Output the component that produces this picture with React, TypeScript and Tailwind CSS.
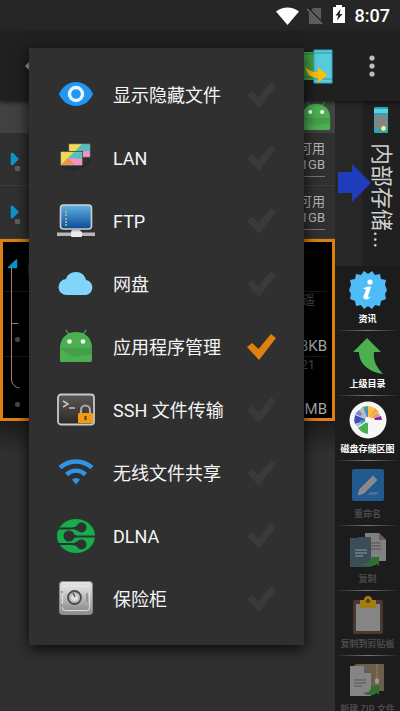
import { ReactNode, useState } from "react";
import { clsx } from "clsx";

function AndroidIcon({ className }: { className?: string }) {
  return (
    <svg viewBox="0 0 34 34" className={className} aria-hidden="true">
      <path d="M7 1l4 6M27 1l-4 6" stroke="#3f8f43" strokeWidth="1.4" />
      <path d="M1 19C1 9 8 3 17 3s16 6 16 16v12a2 2 0 0 1-2 2H3a2 2 0 0 1-2-2z" fill="#4caf50" />
      <path d="M1 19h32v6L14 28z" fill="#459e49" />
      <path d="M1 19l13 14H3a2 2 0 0 1-2-2z" fill="#4caf50" />
      <circle cx="10.500" cy="12.500" r="2.300" fill="#fff" />
      <circle cx="24" cy="12.500" r="2.300" fill="#fff" />
    </svg>
  );
}

function EyeIcon() {
  return (
    <svg viewBox="0 0 38 38" className="size-[38px]">
      <path d="M2 17C5 10 11 5 19 5s14 5 17 12c-3 7-9 12-17 12S5 24 2 17z" fill="#2196f3" />
      <circle cx="19" cy="17" r="6.500" fill="none" stroke="#e3f2fd" strokeWidth="3.400" />
    </svg>
  );
}

function LanIcon() {
  return (
    <svg viewBox="0 0 38 38" className="size-[38px]">
      <path d="M4 26h21l9-8v4l-9 6-9 3-11-3z" fill="#252836" />
      <path d="M12 4h21v13H12z" fill="#4fc1c0" />
      <path d="M12 4h13l-7 7h-6z" fill="#f5d94e" />
      <path d="M26 11h7v6h-7z" fill="#f48fc8" />
      <path d="M12 4h21v13H12z" fill="none" stroke="#8d8d6a" strokeWidth="0.6" />
      <path d="M3 11h23v14H3z" fill="#303030" />
      <path d="M4 12h21v13H4z" fill="#4fc1c0" />
      <path d="M4 12h13L4 25z" fill="#f5d94e" />
      <path d="M4 25l7-7 7 7z" fill="#f2913d" />
      <path d="M11 18l14 1v6h-7z" fill="#f48fc8" />
      <path d="M4 12h21v13H4z" fill="none" stroke="#c9b98a" strokeWidth="0.6" />
    </svg>
  );
}

function FtpIcon() {
  return (
    <svg viewBox="0 0 38 38" className="size-[38px]">
      <defs>
        <linearGradient id="screen" x1="0" y1="0" x2="0" y2="1">
          <stop offset="0" stopColor="#62b2e4" />
          <stop offset="1" stopColor="#0b4a94" />
        </linearGradient>
      </defs>
      <rect x="3.500" y="2" width="31" height="24" rx="3" fill="url(#screen)" stroke="#cfcfcf" strokeWidth="1.600" />
      <path d="M8 9h2M8 12h2M8 16h2M8 19h2M8 22h2" stroke="#b3c884" strokeWidth="1.300" />
      <path d="M15 27h8l1 2h-10z" fill="#c4c4c4" />
      <path d="M0 29.500h38v3.500H0z" fill="#b7b7b7" />
      <rect x="14" y="28.500" width="11" height="5.500" rx="1" fill="#ececec" />
    </svg>
  );
}

function CloudIcon() {
  return (
    <svg viewBox="0 0 38 38" className="size-[38px]">
      <path d="M10 29a8 8 0 0 1-1-16c1-4 5-7 10-7s9 3 10 8a7.600 7.600 0 0 1 0 15z" fill="#81d4fa" />
    </svg>
  );
}

function SshIcon() {
  return (
    <svg viewBox="0 0 38 38" className="size-[38px]">
      <defs>
        <linearGradient id="terminal" x1="0" y1="0" x2="0" y2="1">
          <stop offset="0" stopColor="#5b5855" />
          <stop offset="1" stopColor="#2b2826" />
        </linearGradient>
      </defs>
      <rect x="1" y="2.500" width="36" height="30" rx="3" fill="url(#terminal)" stroke="#c9c9c9" strokeWidth="1.800" />
      <path d="M6 9l5 3-5 3M12 16h6" fill="none" stroke="#c4c4c4" strokeWidth="1.500" />
      <path d="M24 22v-4a4.500 4.500 0 0 1 9 0v4" fill="none" stroke="#a9a9a9" strokeWidth="2.200" />
      <rect x="21" y="21" width="15" height="10" rx="1" fill="#f29b0c" />
      <path d="M28.500 24v4" stroke="#5d3a00" strokeWidth="2" />
    </svg>
  );
}

function WifiIcon() {
  return (
    <svg viewBox="0 0 38 38" className="size-[38px]" fill="none" stroke="#2e94e8" strokeWidth="4.400">
      <path d="M3 12.500c10-8 22-8 32 0" />
      <path d="M9.500 19.500c6-5 13-5 19 0" />
      <path d="M15 24.500c2.500-2 5.500-2 8 0l-4 5z" fill="#2e94e8" stroke="none" />
    </svg>
  );
}

function DlnaIcon() {
  return (
    <svg viewBox="0 0 38 38" className="size-[38px]">
      <ellipse cx="19" cy="18" rx="19" ry="17" fill="#14ae4d" />
      <g stroke="#303030" strokeWidth="2" fill="none">
        <path d="M0 10.500h15c3 0 4-2 8-2M38 18.500H19c-3 0-4-1-7-1M0 26h15c3 0 4 1 8 1" />
      </g>
      <g fill="#303030">
        <circle cx="24.500" cy="9.500" r="5" />
        <circle cx="12" cy="18" r="5.500" />
        <circle cx="24.500" cy="26.500" r="5" />
        <path d="M15 10.500l5-2v4zM15 15l6 3.500-6 2zM15 26l6-3v6z" />
      </g>
    </svg>
  );
}

function SafeIcon() {
  return (
    <svg viewBox="0 0 38 38" className="size-[38px]">
      <defs>
        <linearGradient id="steel" x1="0" y1="0" x2="0" y2="1">
          <stop offset="0" stopColor="#e8e8e8" />
          <stop offset="1" stopColor="#8e8e8e" />
        </linearGradient>
      </defs>
      <rect x="2.500" y="0.500" width="33" height="33" rx="3" fill="url(#steel)" stroke="#8b8b8b" />
      <rect x="5.500" y="3.500" width="27" height="26" rx="3" fill="url(#steel)" stroke="#dcdcdc" />
      <path d="M30 12v9M5 10v2M5 23v3" stroke="#888" strokeWidth="1.500" />
      <circle cx="17.500" cy="16.500" r="6.500" fill="#b5b5b5" stroke="#4c4c4c" strokeWidth="1.800" />
      <circle cx="17.500" cy="16.500" r="3.500" fill="#e0e0e0" />
      <path d="M16 12l2 4" stroke="#555" strokeWidth="1.500" />
    </svg>
  );
}

function InfoIcon() {
  return (
    <svg viewBox="0 0 38 38" className="size-[38px]">
      <path
        d="M19 3l4-3 3 4 5-1 1 5 5 1-1 5 2 5-2 4 1 5-5 2-1 5-5-1-3 4-4-3-4 3-3-4-5 1-1-5-5-2 1-5-2-4 2-5-1-5 5-1 1-5 5 1 3-4z"
        fill="#4fbcf7"
      />
      <circle cx="21" cy="11" r="2.600" fill="#fff" />
      <path d="M15 17c3-1 5-2 7-1l-3 9c0 2 1 1 3 0-2 3-4 4-6 3-2 0-2-2-1-4l2-5c0-1-1-1-3-1z" fill="#fff" />
    </svg>
  );
}

function UpIcon() {
  return (
    <svg viewBox="0 0 38 38" className="size-[38px]">
      <path d="M18 2l14 14h-7c-1 8 2 15 9 22-14-2-24-10-24-22H4z" fill="#4caf50" />
    </svg>
  );
}

function DiskMapIcon() {
  return (
    <svg viewBox="0 0 38 38" className="size-[38px]">
      <circle cx="19" cy="19" r="18.500" fill="#f7f7f7" />
      <path d="M19 19V5a14 14 0 0 1 8 3z" fill="#ffc04a" />
      <path d="M20 17l6-10 4 4z" fill="#ffa726" />
      <path d="M20 18l8-7 4 3z" fill="#bdbdbd" />
      <path d="M20 18l8-5 3 2z" fill="#f79a1e" />
      <path d="M25 17l7-2 1 4h-7z" fill="#8e24aa" />
      <path d="M19 19L13 6l6-1z" fill="#4caf50" />
      <path d="M19 19V8h-4z" fill="#3f8fdc" />
      <path d="M19 19l-9-10 4-3z" fill="#bdbdbd" />
      <path d="M19 19L6 13l4-4z" fill="#7986cb" />
      <path d="M19 19L6 23a14 14 0 0 1 0-9z" fill="#3f51b5" />
      <path d="M19 19l-8-3 3-4z" fill="#bdbdbd" />
      <path d="M18 19l-9 7-3-3z" fill="#bdbdbd" />
      <path d="M19 19l-7 4-1-4z" fill="#29a3e8" />
      <path d="M19 20v13a14 14 0 0 1-10-6z" fill="#4caf50" />
      <circle cx="19" cy="19" r="3" fill="#f7f7f7" />
    </svg>
  );
}

function RenameIcon() {
  return (
    <svg viewBox="0 0 38 38" className="size-[38px]">
      <rect x="3" y="3" width="32" height="32" rx="2" fill="#22598f" />
      <path d="M9 29l2-6 13-13 4 4-13 13z" fill="#898989" stroke="#898989" strokeLinejoin="round" />
      <path d="M21 26h9l-3 3h-9z" fill="#4b7199" />
    </svg>
  );
}

function CopyIcon() {
  return (
    <svg viewBox="0 0 38 38" className="size-[38px]">
      <path d="M16 2h14l7 7v21H16z" fill="#808080" />
      <path d="M30 2l7 7h-7z" fill="#5d5d5d" />
      <path d="M22 12h10M22 15h10M22 18h10" stroke="#555" />
      <path d="M1 7h7l2-1h12v30H1z" fill="#3b4d57" />
      <path d="M6 19h12M6 22h12M6 25h8" stroke="#73818a" strokeWidth="1.300" />
      <path d="M13 33c8 0 7-5 10-5l-2-2h9v9l-2-2c-4 3-9 3-15 0z" fill="#2e6e31" />
    </svg>
  );
}

function ClipboardIcon() {
  return (
    <svg viewBox="0 0 38 38" className="size-[38px]">
      <rect x="4" y="4" width="30" height="34" rx="2" fill="#4d382f" />
      <path d="M7 8h24v27H7z" fill="#858585" />
      <path d="M11 4h4a4 4 0 0 1 8 0h4v8H11z" fill="#a67c12" />
      <circle cx="19" cy="5" r="2" fill="#4d382f" />
    </svg>
  );
}

function ZipIcon() {
  return (
    <svg viewBox="0 0 38 38" className="size-[38px]">
      <path d="M5 5l2-2h28v27H5z" fill="#6d5d4b" />
      <path d="M28 3v15" stroke="#897a66" strokeWidth="2" strokeDasharray="1 1" />
      <rect x="26" y="17" width="4" height="6" rx="2" fill="#999" />
      <path d="M1 5h14l7 7v23H1z" fill="#858585" />
      <path d="M15 5l7 7h-7z" fill="#5d5d5d" />
      <path d="M5 19h12M5 22h12M5 25h8" stroke="#555" />
      <path d="M14 32c8 0 7-5 9-5l-2-2h9v9l-2-2c-4 3-9 3-14 0z" fill="#2e6e31" />
    </svg>
  );
}

interface Place {
  id: string;
  label: string;
  icon: ReactNode;
}

const places: Place[] = [
  { id: "hidden", label: "显示隐藏文件", icon: <EyeIcon /> },
  { id: "lan", label: "LAN", icon: <LanIcon /> },
  { id: "ftp", label: "FTP", icon: <FtpIcon /> },
  { id: "cloud", label: "网盘", icon: <CloudIcon /> },
  { id: "apps", label: "应用程序管理", icon: <AndroidIcon className="mb-1 size-[34px]" /> },
  { id: "ssh", label: "SSH 文件传输", icon: <SshIcon /> },
  { id: "wifi", label: "无线文件共享", icon: <WifiIcon /> },
  { id: "dlna", label: "DLNA", icon: <DlnaIcon /> },
  { id: "safe", label: "保险柜", icon: <SafeIcon /> },
];

const actions = [
  { label: "资讯", icon: <InfoIcon />, enabled: true },
  { label: "上级目录", icon: <UpIcon />, enabled: true },
  { label: "磁盘存储区图", icon: <DiskMapIcon />, enabled: true },
  { label: "重命名", icon: <RenameIcon />, enabled: false },
  { label: "复制", icon: <CopyIcon />, enabled: false },
  { label: "复制到剪贴板", icon: <ClipboardIcon />, enabled: false },
  { label: "新建 ZIP 文件", icon: <ZipIcon />, enabled: false },
];

function StatusBar() {
  return (
    <div className="flex h-[31px] shrink-0 items-center justify-end bg-[#262626] pr-2.5">
      <svg viewBox="0 0 24 18" className="mr-2 h-[18px] w-6">
        <path d="M1 4.500C8-1 17-1 24 4.500L12.500 18z" fill="#fff" />
      </svg>
      <svg viewBox="0 0 16 18" className="mr-2.5 h-[18px] w-4">
        <path d="M6 1h8v16H2V6z" fill="#5c5c5c" />
        <path d="M0 1l16 16" stroke="#262626" strokeWidth="3" />
        <path d="M0 2l15 15" stroke="#777" strokeWidth="1.200" />
      </svg>
      <svg viewBox="0 0 12 18" className="mr-2.5 mb-1 h-[18px] w-3">
        <path d="M3 0h6v2h3v16H0V2h3z" fill="#fff" />
        <path d="M7.500 4L2.500 10.500h2.700L4 15.500l5.500-6.500H6.700z" fill="#262626" />
      </svg>
      <span className="text-lg leading-8 font-medium text-white">8:07</span>
    </div>
  );
}

function Toolbar() {
  return (
    <header className="z-[1] flex h-[70px] shrink-0 items-center justify-between bg-[#202020] pr-[22px] pl-[25px] shadow-[0_2px_4px_rgba(0,0,0,0.5)]">
      <button aria-label="返回">
        <svg viewBox="0 0 8 10" className="h-2.5 w-2">
          <path d="M0 5l5-5v10z" fill="#aaa" />
        </svg>
      </button>
      <div className="flex items-center gap-[33px]">
        <button aria-label="切换面板">
          <svg viewBox="0 0 40 36" className="h-9 w-10">
            <path d="M2 4h20v28H2z" fill="#43a047" />
            <path d="M2 6h20M2 29h20" stroke="#2f7c34" />
            <path d="M21 2h18v33H21z" fill="#5acbdc" stroke="#38a9bb" />
            <path d="M21 5h18M21 31h18" stroke="#2b9aac" />
            <path d="M12 18c3 4 7 6 13 6v-5l9 8-9 8v-5c-7 0-12-4-13-12z" fill="#ffc107" />
          </svg>
        </button>
        <button aria-label="更多">
          <svg viewBox="0 0 12 22" className="h-[22px] w-3" fill="#bdbdbd">
            <circle cx="6" cy="3" r="2.600" />
            <circle cx="6" cy="11" r="2.600" />
            <circle cx="6" cy="19" r="2.600" />
          </svg>
        </button>
      </div>
    </header>
  );
}

function StorageRow() {
  return (
    <div className="flex h-[53px] justify-between border-b border-[#3c3c3c] pr-2.5 pl-2.5">
      <svg viewBox="0 0 12 53" className="h-[53px] w-3">
        <path d="M1.500 20.500h1l5.500 5.500-5.500 5.500h-1z" fill="#0d95cc" stroke="#0d95cc" strokeWidth="1.500" strokeLinejoin="round" />
        <rect x="5" y="33" width="5" height="5" rx="1" fill="#606060" />
      </svg>
      <div className="mt-2 h-9 w-24 border-b border-[#757575] text-right text-[13px] leading-4 text-[#b4b4b4]">
        <p>可用</p>
        <p>1GB</p>
      </div>
    </div>
  );
}

function FileTree() {
  return (
    <div className="flex border-3 border-[#df7f0f] bg-black">
      <svg viewBox="0 0 30 176" className="h-44 w-[30px]">
        <path d="M2 49.500h28M2 114.500h28" stroke="#1b1b1b" />
        <path d="M13.500 18v7.500h-8z" fill="#0d95cc" stroke="#0d95cc" strokeWidth="1.500" strokeLinejoin="round" />
        <path d="M8.500 26v112q1 7 8 8M8.500 81.500h7" fill="none" stroke="#a08068" />
        <rect x="12" y="95" width="5" height="5" rx="2" fill="#474747" />
        <rect x="12" y="160" width="5" height="5" rx="2" fill="#474747" />
        <path d="M25.500 21v13" stroke="#16351a" />
      </svg>
      <div className="flex-1 pt-[49px] pr-[5px] text-right">
        <div className="h-[65px] border-t border-[#1b1b1b]">
          <p className="pr-3 text-[13px] leading-4 text-[#4b4b4b]">遥</p>
          <p className="pt-7 text-[15px] leading-5 text-[#a8a8a8]">8KB</p>
        </div>
        <div className="h-[62px] border-t border-[#1b1b1b]">
          <p className="pr-3 text-[13px] leading-4 text-[#4b4b4b]">21</p>
          <p className="pt-7 text-[15px] leading-4 text-[#a8a8a8]">9MB</p>
        </div>
      </div>
    </div>
  );
}

function StorageTab() {
  return (
    <div className="flex h-[165px] shrink-0 justify-between bg-[#272727]">
      <svg viewBox="0 0 34 38" className="z-[1] mt-[63px] -mr-2.5 ml-[3px] h-[38px] w-[34px] shrink-0">
        <path d="M0 8h14V0l19 19-19 19v-9H0z" fill="#1f3cba" />
      </svg>
      <button className="flex w-[38px] shrink-0 flex-col items-center bg-[#202020] pt-1.5">
        <svg viewBox="0 0 14 26" className="mb-2.5 h-[26px] w-3.5">
          <rect width="14" height="26" rx="1" fill="#2aa5b8" />
          <path d="M0 2h14v4H0z" fill="#5bd0df" />
          <path d="M1 8h12v14H1z" fill="#858585" />
          <circle cx="9.500" cy="21.500" r="2.400" fill="#f4f77a" />
        </svg>
        <span className="text-[22px] leading-6 whitespace-nowrap text-[#d0d0d0] [text-orientation:sideways] [writing-mode:vertical-rl]">
          内部存储...
        </span>
      </button>
    </div>
  );
}

function ActionBar() {
  return (
    <aside className="flex w-[65px] shrink-0 flex-col bg-[#1c1c1c]">
      <StorageTab />
      {actions.map((action) => (
        <button
          key={action.label}
          disabled={!action.enabled}
          className="flex h-[65px] shrink-0 flex-col items-center pt-[5px]"
        >
          {action.icon}
          <span
            className={clsx(
              "mt-0.5 text-[9px] leading-4 font-bold whitespace-nowrap",
              action.enabled ? "text-white" : "text-[#4a4a4a]"
            )}
          >
            {action.label}
          </span>
          <span className="mt-[3px] h-px w-full bg-linear-to-r from-transparent via-[#777] to-transparent" />
        </button>
      ))}
    </aside>
  );
}

function PlacesDialog() {
  const [checked, setChecked] = useState<string[]>(["apps"]);

  const toggle = (id: string) => {
    setChecked(
      checked.includes(id) ? checked.filter((c) => c !== id) : [...checked, id]
    );
  };

  return (
    <div
      role="dialog"
      aria-label="显示位置"
      className="absolute top-12 right-24 left-[29px] z-10 bg-[#303030] pt-4 pb-3.5 shadow-[0_4px_14px_rgba(0,0,0,0.8)]"
    >
      {places.map((place) => (
        <label
          key={place.id}
          className="relative flex h-[63px] cursor-pointer items-center pr-7 pl-7"
        >
          <span className="flex w-[38px] justify-center">{place.icon}</span>
          <span className="ml-[18px] flex-1 text-lg leading-6 whitespace-nowrap text-[#f5f5f5]">
            {place.label}
          </span>
          <input
            type="checkbox"
            className="peer sr-only"
            checked={checked.includes(place.id)}
            onChange={() => toggle(place.id)}
          />
          <svg
            viewBox="0 0 30 28"
            className="h-7 w-[30px] fill-[#3a3a3a] peer-checked:fill-[#e0800d]"
          >
            <path d="M1 13l5-4 6.500 6L25 0l5 4-17 22z" />
          </svg>
        </label>
      ))}
    </div>
  );
}

export default function App() {
  return (
    <div className="relative flex h-screen flex-col overflow-hidden bg-[#303030] font-[Roboto,'Noto_Sans_CJK_SC',sans-serif]">
      <StatusBar />
      <Toolbar />
      <div className="flex min-h-0 flex-1">
        <main className="flex min-w-0 flex-1 flex-col bg-[#303030]">
          <div className="flex h-8 shrink-0 justify-end bg-[#424242]">
            <AndroidIcon className="mr-1 size-[30px]" />
          </div>
          <StorageRow />
          <StorageRow />
          <FileTree />
          <div className="h-8 bg-linear-to-b from-[#1c1c1c] to-[#303030]" />
        </main>
        <ActionBar />
      </div>
      <PlacesDialog />
    </div>
  );
}
